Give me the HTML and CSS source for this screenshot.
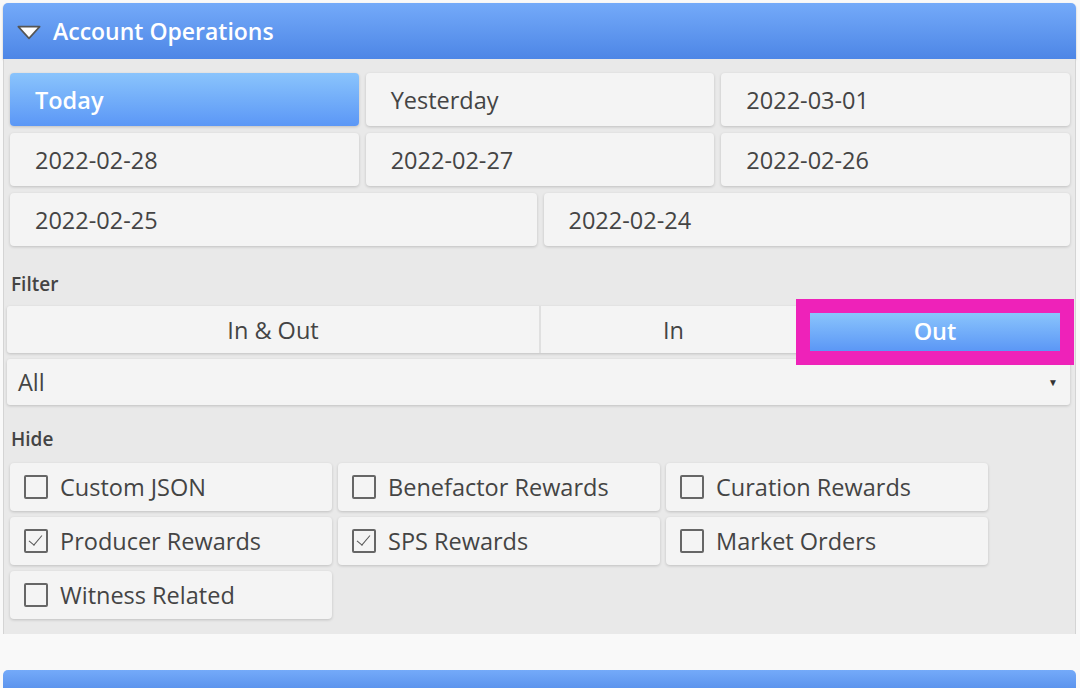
FILE: index.html
```html
<!DOCTYPE html>
<html lang="en">
<head>
    <meta charset="UTF-8">
    <title>Account Operations</title>
    <link rel="stylesheet" href="styles.css">
</head>
<body>
    <div class="section">
        <div class="section-head">
            <svg class="caret" width="26" height="15" viewBox="0 0 24 14">
                <path d="M2 1.5 L22 1.5 L12 12.5 Z" fill="#fff" stroke="#555" stroke-width="1.5" stroke-linejoin="round"/>
            </svg>
            <span>Account Operations</span>
        </div>
        <div class="section-body">
            <div class="days">
                <button class="day active">Today</button>
                <button class="day">Yesterday</button>
                <button class="day">2022-03-01</button>
                <button class="day">2022-02-28</button>
                <button class="day">2022-02-27</button>
                <button class="day">2022-02-26</button>
            </div>
            <div class="days two">
                <button class="day">2022-02-25</button>
                <button class="day">2022-02-24</button>
            </div>

            <div class="label">Filter</div>
            <div class="segments">
                <div class="seg wide">In &amp; Out</div>
                <div class="seg">In</div>
                <div class="seg out"><span class="seg-on">Out</span></div>
            </div>
            <div class="select">
                <span>All</span>
                <span class="arrow">▼</span>
            </div>

            <div class="label">Hide</div>
            <div class="checks">
                <label class="check"><span class="box"></span>Custom JSON</label>
                <label class="check"><span class="box"></span>Benefactor Rewards</label>
                <label class="check"><span class="box"></span>Curation Rewards</label>
                <label class="check"><span class="box on"></span>Producer Rewards</label>
                <label class="check"><span class="box on"></span>SPS Rewards</label>
                <label class="check"><span class="box"></span>Market Orders</label>
                <label class="check"><span class="box"></span>Witness Related</label>
            </div>
        </div>
    </div>

    <div class="section next">
        <div class="section-head"></div>
    </div>
</body>
</html>
```

FILE: styles.css
```css
body {
    margin: 0;
    padding: 3px 4px 0 3px;
    background: #f9f9f9;
    font-family: "Open Sans", "Noto Sans", sans-serif;
    color: #444;
    overflow: hidden;
    height: 685px;
}
.section-head {
    height: 56px;
    display: flex;
    align-items: center;
    gap: 11px;
    padding-left: 13px;
    border-radius: 5px 5px 0 0;
    background: linear-gradient(#74aaf9, #4d86e6);
    color: #fff;
    font-size: 23px;
    font-weight: 600;
    box-shadow: 0 1px 2px rgba(0,0,0,0.25);
}
.caret {
    margin-top: 2px;
}
.section-body {
    background: #e9e9e9;
    border-left: 1px solid #d4d4d4;
    border-right: 1px solid #d4d4d4;
    padding: 14px 5px 14px 2px;
    height: 547px;
}
.days {
    display: grid;
    grid-template-columns: repeat(3, 1fr);
    gap: 7px;
    margin-left: 4px;
    margin-bottom: 7px;
}
.days.two {
    grid-template-columns: repeat(2, 1fr);
}
.day {
    height: 53px;
    border: none;
    border-radius: 4px;
    background: #f4f4f4;
    box-shadow: 0 1px 3px rgba(0,0,0,0.18);
    text-align: left;
    padding: 0 0 0 25px;
    font-family: inherit;
    font-size: 23.5px;
    color: #444;
}
.day.active {
    background: linear-gradient(#8ac4fc, #5b97f6);
    color: #fff;
    font-weight: 600;
}
.label {
    font-size: 19px;
    font-weight: 600;
    color: #444;
    margin: 25px 0 9px 5px;
    height: 26px;
    line-height: 26px;
}
.select + .label {
    margin: 21px 0 11px 5px;
}
.segments {
    display: flex;
    height: 47px;
    margin-left: 1px;
    background: #f4f4f4;
    border-radius: 3px;
    box-shadow: 0 1px 3px rgba(0,0,0,0.18);
}
.seg {
    flex: 1;
    display: flex;
    align-items: center;
    justify-content: center;
    font-size: 23.5px;
}
.seg.wide {
    flex: none;
    width: 532px;
    border-right: 2px solid #e0e0e0;
}
.seg.out {
    flex: none;
    width: 264px;
    box-sizing: border-box;
    align-items: stretch;
    padding: 7px 10px 2px 4px;
}
.seg-on {
    flex: 1;
    display: flex;
    align-items: center;
    justify-content: center;
    padding-bottom: 3px;
    background: linear-gradient(#8ac4fc, #5b97f6);
    color: #fff;
    font-weight: 600;
    outline: 14px solid #ee22b9;
    position: relative;
}
.select {
    display: flex;
    align-items: center;
    justify-content: space-between;
    height: 46px;
    margin: 6px 0 0 1px;
    padding: 0 12px 0 11px;
    background: #f4f4f4;
    border-radius: 3px;
    box-shadow: 0 1px 3px rgba(0,0,0,0.18);
    font-size: 23.5px;
}
.arrow {
    font-size: 10px;
    color: #333;
}
.checks {
    display: grid;
    grid-template-columns: repeat(3, 322px);
    gap: 6px 6px;
    margin-left: 4px;
}
.check {
    height: 48px;
    display: flex;
    align-items: center;
    gap: 12px;
    padding-left: 14px;
    background: #f4f4f4;
    border-radius: 4px;
    box-shadow: 0 1px 3px rgba(0,0,0,0.18);
    font-size: 23.5px;
    color: #444;
}
.box {
    width: 20px;
    height: 20px;
    border: 2px solid #666;
    border-radius: 2px;
    position: relative;
}
.box.on::after {
    content: "";
    position: absolute;
    left: 6px;
    top: 1px;
    width: 6px;
    height: 12px;
    border-right: 1.5px solid #555;
    border-bottom: 1.5px solid #555;
    transform: rotate(40deg);
}
.next {
    margin-top: 36px;
}
.next .section-head {
    height: 30px;
    box-shadow: none;
}
```
